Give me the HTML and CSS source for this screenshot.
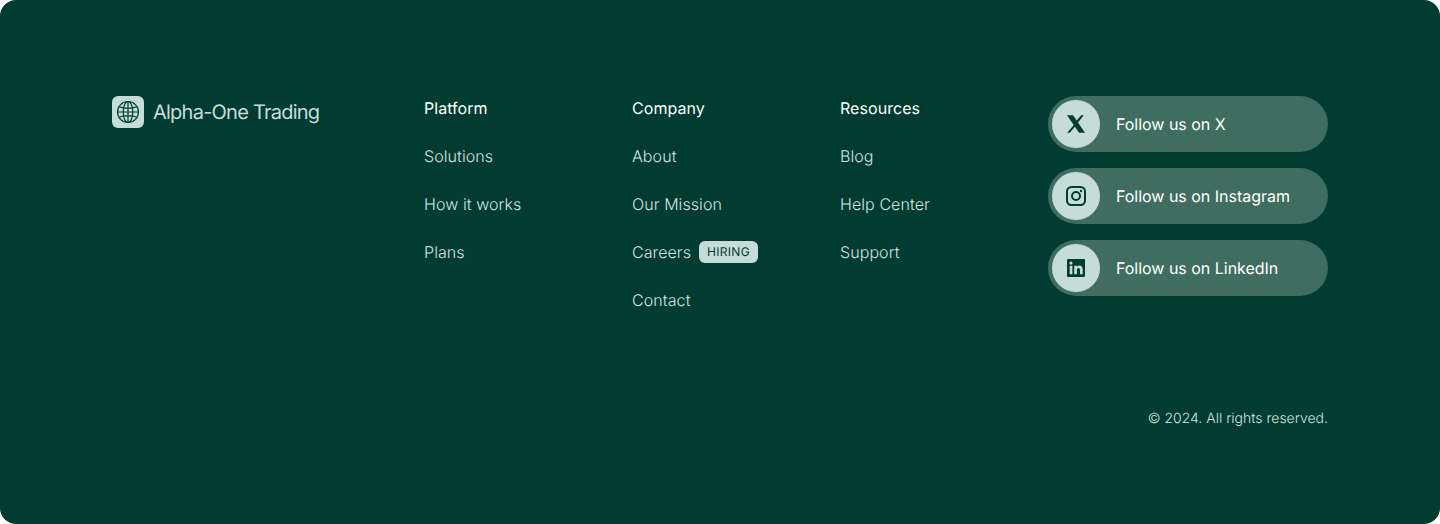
FILE: index.html
```html
<!DOCTYPE html>
<html lang="en">
<head>
<meta charset="utf-8">
<title>Alpha-One Trading</title>
<link rel="stylesheet" href="styles.css">
</head>
<body>
<footer class="footer">
  <div class="top">
    <a class="brand" href="#">
      <span class="brand-icon">
        <svg width="24" height="24" viewBox="0 0 24 24" fill="none" stroke="#033d30" stroke-width="1.200">
          <circle cx="12" cy="12" r="10.500"/>
          <ellipse cx="12" cy="12" rx="4.800" ry="10.500"/>
          <path d="M12 1.500v21M1.500 12h21M3.200 6.800c2.400 1 5.500 1.500 8.800 1.500s6.400-.5 8.800-1.500M3.200 17.200c2.400-1 5.500-1.500 8.800-1.500s6.400.5 8.800 1.500"/>
        </svg>
      </span>
      <span class="brand-name">Alpha-One Trading</span>
    </a>
    <nav class="col">
      <h3 class="col-title">Platform</h3>
      <a class="link" href="#">Solutions</a>
      <a class="link" href="#">How it works</a>
      <a class="link" href="#">Plans</a>
    </nav>
    <nav class="col">
      <h3 class="col-title">Company</h3>
      <a class="link" href="#">About</a>
      <a class="link" href="#">Our Mission</a>
      <a class="link" href="#">Careers<span class="badge">HIRING</span></a>
      <a class="link" href="#">Contact</a>
    </nav>
    <nav class="col">
      <h3 class="col-title">Resources</h3>
      <a class="link" href="#">Blog</a>
      <a class="link" href="#">Help Center</a>
      <a class="link" href="#">Support</a>
    </nav>
    <div class="social">
      <a class="pill" href="#">
        <span class="pill-icon">
          <svg width="20" height="20" viewBox="0 0 20 20" fill="#033d30"><path d="M1 1.200h6l3.700 5.300 4.500-5.300h2.600L12 8.400l7 10.400h-6l-4.100-6-5.100 6H1.200l6.500-7.700L1 1.200z"/></svg>
        </span>
        Follow us on X
      </a>
      <a class="pill" href="#">
        <span class="pill-icon">
          <svg width="20" height="20" viewBox="0 0 20 20" fill="none" stroke="#033d30" stroke-width="2"><rect x="1" y="1" width="18" height="18" rx="4.500"/><circle cx="10" cy="10" r="4"/><circle cx="15" cy="5" r="1.200" fill="#033d30" stroke="none"/></svg>
        </span>
        Follow us on Instagram
      </a>
      <a class="pill" href="#">
        <span class="pill-icon">
          <svg width="20" height="20" viewBox="0 0 20 20"><path fill="#033d30" fill-rule="evenodd" d="M2 1h16a1 1 0 0 1 1 1v16a1 1 0 0 1-1 1H2a1 1 0 0 1-1-1V2a1 1 0 0 1 1-1zM3.700 7.800v8.500h2.700V7.800H3.700zM5 3.500a1.600 1.600 0 1 0 0 3.200 1.600 1.600 0 0 0 0-3.200zM8.200 7.800v8.500h2.700v-4.400c0-1.200.5-2 1.600-2s1.500.8 1.500 2v4.400h2.700v-5c0-2.500-1.300-3.700-3.200-3.700-1.300 0-2.100.6-2.600 1.400V7.800H8.200z"/></svg>
        </span>
        Follow us on LinkedIn
      </a>
    </div>
  </div>
  <p class="copy">© 2024. All rights reserved.</p>
</footer>
</body>
</html>
```
FILE: styles.css
```css
* { box-sizing: border-box; }
html, body { margin: 0; background: #fff; }
body { font-family: Inter, "Liberation Sans", sans-serif; text-rendering: geometricPrecision; -webkit-font-smoothing: antialiased; }
a { text-decoration: none; color: inherit; }
.footer {
  height: 524px;
  background: #023c30;
  border-radius: 16px;
  padding: 96px 112px 0;
  will-change: opacity;
}
.top { display: flex; gap: 32px; height: 313px; }
.brand { width: 280px; height: 32px; display: flex; align-items: center; gap: 9px; color: #c5dcd8; }
.brand-icon {
  width: 32px; height: 32px; border-radius: 6px; background: #c5dcd8;
  display: flex; align-items: center; justify-content: center;
}
.brand-name { font-size: 20px; letter-spacing: -0.76px; line-height: 32px; }
.col { width: 176px; display: flex; flex-direction: column; align-items: flex-start; gap: 24px; }
.col-title { margin: 0; font-size: 16px; line-height: 24px; font-weight: 400; letter-spacing: 0.05px; color: #fff; }
.link { display: flex; align-items: center; gap: 8px; font-size: 16px; line-height: 24px; font-weight: 300; letter-spacing: 0.08px; color: #d2e3e0; }
.badge {
  display: inline-block; height: 22px; padding: 0 8px; border-radius: 6px;
  background: #c5dcd8; color: #033d30; font-size: 12px; font-weight: 400; line-height: 22px; letter-spacing: 0.3px;
}
.social { width: 280px; display: flex; flex-direction: column; gap: 16px; }
.pill {
  height: 56px; border-radius: 28px; background: #3f6e60; padding: 4px;
  display: flex; align-items: center; gap: 16px; color: #fff; font-size: 16px; font-weight: 400; letter-spacing: -0.02px;
}
.pill-icon {
  width: 48px; height: 48px; border-radius: 50%; background: #c5dcd8;
  display: flex; align-items: center; justify-content: center;
}
.copy { margin: 0; text-align: right; font-size: 14px; line-height: 20px; font-weight: 300; color: #d2e3e0; }
```
